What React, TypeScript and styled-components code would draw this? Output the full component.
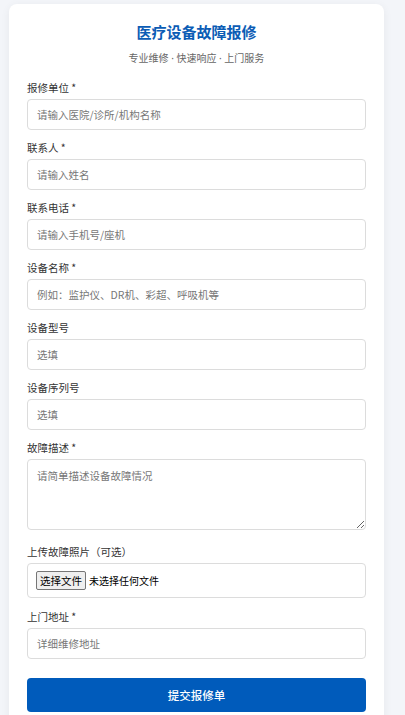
import styled, { createGlobalStyle } from 'styled-components';

const GlobalStyle = createGlobalStyle`
  * {
    box-sizing: border-box;
  }

  body {
    margin: 0;
    background-color: #f3f5f9;
    font-family: "Noto Sans CJK SC", "Noto Sans", sans-serif;
    color: #333;
  }
`;

type Field = {
  label: string;
  placeholder: string;
  required?: boolean;
};

const topFields: Field[] = [
  { label: '报修单位', placeholder: '请输入医院/诊所/机构名称', required: true },
  { label: '联系人', placeholder: '请输入姓名', required: true },
  { label: '联系电话', placeholder: '请输入手机号/座机', required: true },
  { label: '设备名称', placeholder: '例如：监护仪、DR机、彩超、呼吸机等', required: true },
  { label: '设备型号', placeholder: '选填' },
  { label: '设备序列号', placeholder: '选填' },
];

const FieldLabel = ({ label, required }: { label: string; required?: boolean }) => (
  <Label>
    {label}
    {required && ' *'}
  </Label>
);

export default function App() {
  return (
    <>
      <GlobalStyle />
      <Page>
        <Card>
          <Title>医疗设备故障报修</Title>
          <Subtitle>专业维修 · 快速响应 · 上门服务</Subtitle>

          <form onSubmit={(e) => e.preventDefault()}>
            {topFields.map((field) => (
              <Group key={field.label}>
                <FieldLabel label={field.label} required={field.required} />
                <Input type="text" placeholder={field.placeholder} />
              </Group>
            ))}

            <Group $extra={4}>
              <FieldLabel label="故障描述" required />
              <TextArea placeholder="请简单描述设备故障情况" />
            </Group>

            <Group $extra={1}>
              <Label>上传故障照片（可选）</Label>
              <FileBox>
                <HiddenFile type="file" accept="image/*" />
                <FileButton>选择文件</FileButton>
                <FileName>未选择任何文件</FileName>
              </FileBox>
            </Group>

            <Group>
              <FieldLabel label="上门地址" required />
              <Input type="text" placeholder="详细维修地址" />
            </Group>

            <SubmitButton type="submit">提交报修单</SubmitButton>
          </form>
        </Card>
      </Page>
    </>
  );
}

const Page = styled.main`
  padding: 4px 21px 20px 9px;
`;

const Card = styled.section`
  width: 375px;
  padding: 17px 18px 20px;

  border-radius: 8px;
  background-color: #fff;
  box-shadow: 0 2px 10px rgba(0, 0, 0, 0.06);
`;

const Title = styled.h1`
  margin: 0;

  font-size: 15px;
  font-weight: 700;
  line-height: 22px;
  text-align: center;
  color: #0b5cb5;
`;

const Subtitle = styled.p`
  margin: 8px 0 16px;

  font-family: "Noto Sans", "Noto Sans CJK SC", sans-serif;
  font-size: 10px;
  line-height: 14px;
  text-align: center;
  color: #666;
`;

const Group = styled.div<{ $extra?: number }>`
  margin-bottom: ${({ $extra = 0 }) => 11 + $extra}px;
`;

const Label = styled.label`
  display: block;
  margin-bottom: 4px;

  font-size: 10.5px;
  line-height: 14px;
  color: #333;
`;

const fieldBase = `
  display: block;
  width: 100%;
  padding: 0 9px;

  border: 1px solid #dcdcdc;
  border-radius: 4px;
  background-color: #fff;
  font-family: "Noto Sans CJK SC", "Noto Sans", sans-serif;
  font-size: 10.5px;
  color: #333;
  outline: none;

  &::placeholder {
    color: #777;
  }
`;

const Input = styled.input`
  ${fieldBase}
  height: 31px;
`;

const TextArea = styled.textarea`
  ${fieldBase}
  height: 71px;
  padding: 8px 9px;
  resize: vertical;
`;

const FileBox = styled.label`
  position: relative;
  display: flex;
  align-items: center;

  height: 35px;
  padding: 0 8px;

  border: 1px solid #dcdcdc;
  border-radius: 4px;
  cursor: pointer;
`;

const HiddenFile = styled.input`
  position: absolute;
  width: 1px;
  height: 1px;
  opacity: 0;
`;

const FileButton = styled.span`
  display: inline-flex;
  align-items: center;

  height: 19px;
  padding: 0 3px;

  border: 1px solid #767676;
  border-radius: 2px;
  background-color: #efefef;
  font-size: 10.5px;
  color: #000;
`;

const FileName = styled.span`
  margin-left: 3px;

  font-size: 10px;
  color: #000;
`;

const SubmitButton = styled.button`
  display: block;
  width: 100%;
  height: 34px;
  margin-top: 19px;

  border: none;
  border-radius: 4px;
  background-color: #005bbb;
  font-family: "Noto Sans CJK SC", "Noto Sans", sans-serif;
  font-size: 11.5px;
  font-weight: 500;
  color: #fff;
  cursor: pointer;
`;
